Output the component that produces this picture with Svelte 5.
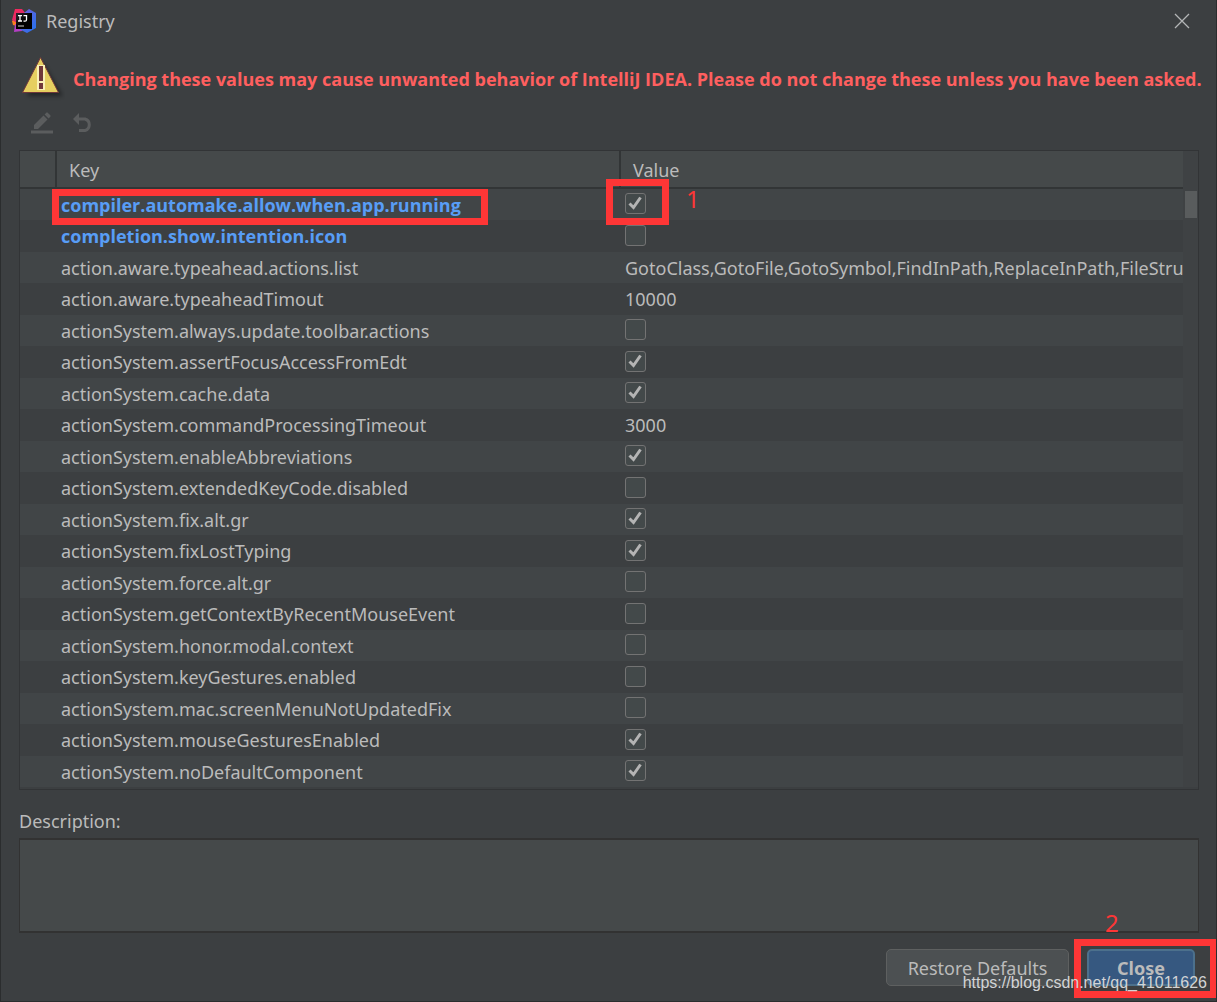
<script>
    let rows = [
        { key: "compiler.automake.allow.when.app.running", value: true, changed: true, marked: true },
        { key: "completion.show.intention.icon", value: false, changed: true },
        {
            key: "action.aware.typeahead.actions.list",
            value: "GotoClass,GotoFile,GotoSymbol,FindInPath,ReplaceInPath,FileStructurePopup",
        },
        { key: "action.aware.typeaheadTimout", value: "10000" },
        { key: "actionSystem.always.update.toolbar.actions", value: false },
        { key: "actionSystem.assertFocusAccessFromEdt", value: true },
        { key: "actionSystem.cache.data", value: true },
        { key: "actionSystem.commandProcessingTimeout", value: "3000" },
        { key: "actionSystem.enableAbbreviations", value: true },
        { key: "actionSystem.extendedKeyCode.disabled", value: false },
        { key: "actionSystem.fix.alt.gr", value: true },
        { key: "actionSystem.fixLostTyping", value: true },
        { key: "actionSystem.force.alt.gr", value: false },
        { key: "actionSystem.getContextByRecentMouseEvent", value: false },
        { key: "actionSystem.honor.modal.context", value: false },
        { key: "actionSystem.keyGestures.enabled", value: false },
        { key: "actionSystem.mac.screenMenuNotUpdatedFix", value: false },
        { key: "actionSystem.mouseGesturesEnabled", value: true },
        { key: "actionSystem.noDefaultComponent", value: true },
    ];
</script>

<div class="dialog">
    <header class="titlebar">
        <svg class="logo" width="24" height="24" viewBox="0 0 24 24">
            <defs>
                <linearGradient id="blue" x1="0" y1="0" x2="1" y2="1">
                    <stop offset="0" stop-color="#7b5bd8" />
                    <stop offset="1" stop-color="#1f74f0" />
                </linearGradient>
                <linearGradient id="red" x1="0" y1="0" x2="1" y2="1">
                    <stop offset="0" stop-color="#fe2857" />
                    <stop offset="1" stop-color="#c42a78" />
                </linearGradient>
                <linearGradient id="black" x1="0" y1="0" x2="1" y2="1">
                    <stop offset="0" stop-color="#2e2630" />
                    <stop offset="0.5" stop-color="#000" />
                </linearGradient>
            </defs>
            <path d="M0 12 L4 9 L5 17 L1 16 Z" fill="#fc801d" />
            <path d="M3 0 L10 0 L14 5 L5 14 L0 11 Z" fill="url(#red)" />
            <path d="M3 15 L12 18 L10 22 L2 23 Z" fill="#b43fc4" />
            <path d="M12 4 L17 0 L24 4 L24 19 L15 24 L7 20 Z" fill="url(#blue)" />
            <rect x="4" y="4" width="16" height="16" fill="url(#black)" />
            <path
                d="M6 6.700h4M8 6.700v5M6 12h4M11.500 6.700h3v4q0 1.500-1.500 1.500h-1.500"
                fill="none"
                stroke="#fff"
                stroke-width="1.300"
            />
            <rect x="6" y="16.500" width="6" height="1" fill="#ccc" />
        </svg>
        <h1>Registry</h1>
        <button class="close-x" aria-label="Close window">
            <svg width="16" height="16" viewBox="0 0 16 16">
                <path d="M1 1 L15 15 M15 1 L1 15" stroke="#b4b6b7" stroke-width="1.300" />
            </svg>
        </button>
    </header>

    <div class="warning">
        <svg width="44" height="44" viewBox="0 0 44 44">
            <path class="shadow" d="M22 6 L42 39 H6 Z" />
            <path d="M19.500 .5 L37.500 35.500 H1.500 Z" fill="#e6cf60" stroke="#70383a" />
            <rect x="16" y="8" width="8" height="25" fill="#f9f0b4" />
            <rect x="18" y="9" width="4" height="15" fill="#70383a" />
            <rect x="18" y="26" width="4" height="6" fill="#70383a" />
        </svg>
        <strong>Changing these values may cause unwanted behavior of IntelliJ IDEA. Please do not change these unless you have been asked.</strong>
    </div>

    <div class="toolbar">
        <button aria-label="Edit" disabled>
            <svg width="22" height="22" viewBox="0 0 22 22" fill="#5b5d5e">
                <path d="M3 17 V13 L12.500 3.500 L16.500 7.500 L7 17 Z" />
                <path d="M13.600 2.400 L15.300 .7 Q16 0 16.700 .7 L19.300 3.300 Q20 4 19.300 4.700 L17.600 6.400 Z" />
                <rect x="0" y="18.500" width="22" height="3" />
            </svg>
        </button>
        <button aria-label="Revert" disabled>
            <svg width="20" height="20" viewBox="0 0 20 20">
                <path d="M0 6 L6 0 V12 Z" fill="#5b5d5e" />
                <path
                    d="M5 6 H12 A6 6 0 0 1 12 17.500 H6"
                    fill="none"
                    stroke="#5b5d5e"
                    stroke-width="3"
                />
            </svg>
        </button>
    </div>

    <div class="table-pane">
        <table>
            <colgroup>
                <col class="col-gutter" />
                <col class="col-key" />
                <col />
            </colgroup>
            <thead>
                <tr>
                    <td></td>
                    <th>Key</th>
                    <th>Value</th>
                </tr>
            </thead>
            <tbody>
                {#each rows as row, i}
                    <tr>
                        <td></td>
                        <td>
                            <label class:changed={row.changed} for="value-{i}">{row.key}</label>
                            {#if row.marked}
                                <span class="mark mark-key"></span>
                            {/if}
                        </td>
                        <td>
                            {#if typeof row.value === "boolean"}
                                <span class="check">
                                    <input id="value-{i}" type="checkbox" bind:checked={row.value} />
                                    <svg width="21" height="21" viewBox="0 0 21 21">
                                        <path d="M4.500 10.500 L8.500 14.500 L15.500 4.500" />
                                    </svg>
                                </span>
                            {:else}
                                <input id="value-{i}" class="value" type="text" bind:value={row.value} />
                            {/if}
                            {#if row.marked}
                                <span class="mark mark-value"></span>
                                <span class="step step-one">1</span>
                            {/if}
                        </td>
                    </tr>
                {/each}
            </tbody>
        </table>
        <div class="scrollbar"><div class="thumb"></div></div>
    </div>

    <label class="description-label" for="description">Description:</label>
    <textarea id="description" readonly></textarea>

    <footer>
        <button class="btn">Restore Defaults</button>
        <div class="close-wrap">
            <button class="btn primary">Close</button>
            <span class="mark mark-close"></span>
            <span class="step step-two">2</span>
        </div>
        <span class="watermark">https://blog.csdn.net/qq_41011626</span>
    </footer>
</div>

<style>
    :global(body) {
        background: #3c3f41;
    }

    .dialog {
        box-sizing: border-box;
        min-height: 100vh;
        display: flex;
        flex-direction: column;
        padding: 0 17px 0 18px;
        background: #3c3f41;
        border: 1px solid #2b2d2e;
        border-top: none;
        color: #bbbbbb;
        font-family: "Noto Sans", "Open Sans", sans-serif;
        font-size: 18px;
        line-height: 24px;
        overflow: hidden;
    }

    button,
    input,
    textarea {
        font: inherit;
        color: inherit;
        margin: 0;
        padding: 0;
        border: none;
        background: none;
    }

    svg {
        display: block;
    }

    .titlebar {
        display: flex;
        align-items: center;
        height: 42px;
        gap: 10px;
        margin-left: -7px;
    }

    h1 {
        flex: 1;
        margin: 0;
        font-size: 18px;
        font-weight: 400;
    }

    .close-x {
        margin-right: 9px;
    }

    .warning {
        display: flex;
        align-items: center;
        gap: 8px;
        height: 48px;
        margin-top: 13px;
        padding-left: 2px;
        color: #ff5f5f;
        font-family: "Open Sans", sans-serif;
        white-space: nowrap;
    }

    .warning svg {
        flex: none;
    }

    .shadow {
        fill: #000;
        opacity: 0.4;
        filter: blur(2px);
    }

    .toolbar {
        display: flex;
        align-items: center;
        gap: 20px;
        height: 40px;
        padding-left: 12px;
        margin-bottom: 7px;
    }

    .table-pane {
        display: flex;
        border: 1px solid #323436;
        padding-bottom: 2px;
    }

    table {
        flex: 1;
        width: 0;
        table-layout: fixed;
        border-collapse: separate;
        border-spacing: 0;
    }

    .col-gutter {
        width: 37px;
    }

    .col-key {
        width: 564px;
    }

    td,
    th {
        padding: 0 0 0 4px;
        text-align: left;
        font-weight: 400;
    }

    thead tr {
        height: 38px;
        background: #45494a;
    }

    thead td,
    thead th {
        border-bottom: 2px solid #323536;
        border-right: 2px solid #323536;
        padding: 2px 0 0 12px;
    }

    thead th:last-child {
        border-right: none;
    }

    tbody tr:nth-child(odd) {
        height: 31px;
        background: #414547;
    }

    tbody tr:nth-child(even) {
        height: 32px;
    }

    tbody td {
        position: relative;
        line-height: 30px;
        vertical-align: middle;
    }

    .changed {
        color: #589df6;
        font-family: "Open Sans", sans-serif;
        font-weight: 700;
    }

    .check {
        position: relative;
        display: block;
        width: 21px;
        height: 21px;
        margin-bottom: 2px;
    }

    .check input {
        display: block;
        box-sizing: border-box;
        width: 21px;
        height: 21px;
        appearance: none;
        border: 1px solid #737373;
        border-radius: 3px;
        background: #43494a;
    }

    .check svg {
        position: absolute;
        inset: 0;
        visibility: hidden;
        pointer-events: none;
        fill: none;
        stroke: #b4b4b4;
        stroke-width: 3;
    }

    .check input:checked + svg {
        visibility: visible;
    }

    .value {
        display: block;
        width: 100%;
        height: 30px;
    }

    .scrollbar {
        width: 15px;
        padding-top: 40px;
        background: #3f4244;
    }

    .thumb {
        width: 12px;
        height: 27px;
        margin-left: 2px;
        background: #595c5d;
    }

    .description-label {
        margin: 19px 0 5px;
    }

    textarea {
        display: block;
        box-sizing: border-box;
        height: 95px;
        background: #45494a;
        border: 1px solid #323232;
        border-width: 2px 1px;
        resize: none;
    }

    footer {
        position: relative;
        display: flex;
        justify-content: flex-end;
        gap: 18px;
        padding: 16px 4px 0 0;
    }

    .btn {
        box-sizing: border-box;
        width: 183px;
        height: 37px;
        border: 1px solid #5e6060;
        border-radius: 5px;
        background: #4c5052;
    }

    .btn.primary {
        display: block;
        width: 108px;
        border: 2px solid #4c708c;
        background: #365880;
        font-weight: 700;
    }

    .close-wrap {
        position: relative;
    }

    /* red callouts laid over the dialog */
    .mark {
        position: absolute;
        box-sizing: border-box;
        border: 7px solid #fe3636;
        pointer-events: none;
        z-index: 1;
    }

    .mark-key {
        left: -5px;
        top: 0;
        width: 436px;
        height: 36px;
    }

    .mark-value {
        left: -15px;
        top: -10px;
        width: 63px;
        height: 46px;
    }

    .mark-close {
        left: -13px;
        top: -10px;
        width: 143px;
        height: 59px;
    }

    .step {
        position: absolute;
        color: #fe3636;
        font-size: 24px;
        font-weight: 400;
        line-height: 28px;
    }

    .step-one {
        left: 65px;
        top: -4px;
    }

    .step-two {
        left: 18px;
        top: -40px;
    }

    .watermark {
        position: absolute;
        right: -8px;
        bottom: -6px;
        z-index: 2;
        color: #d2d4d5;
        font-family: "Liberation Sans", sans-serif;
        font-size: 16px;
        line-height: 18px;
        pointer-events: none;
    }
</style>
